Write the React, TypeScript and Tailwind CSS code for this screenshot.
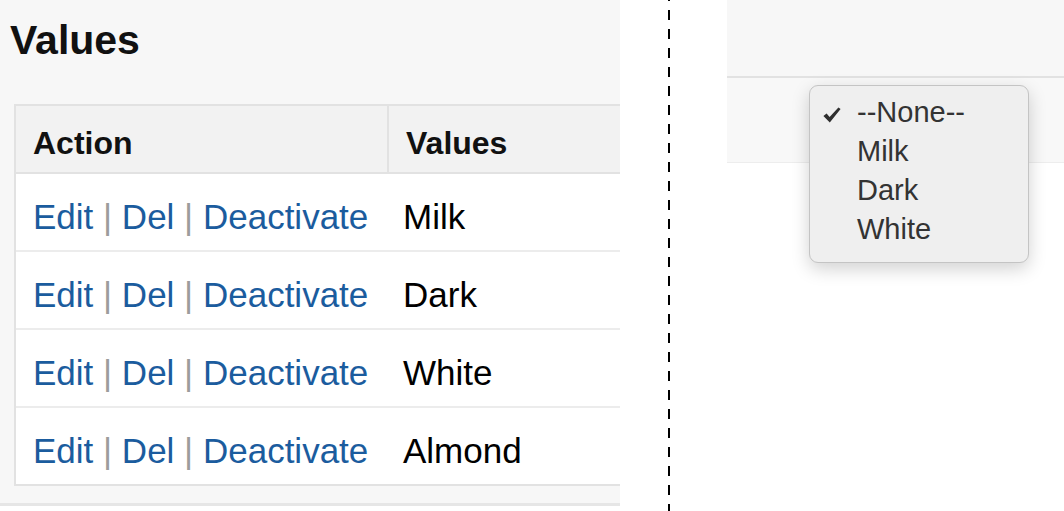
const values = ['Milk', 'Dark', 'White', 'Almond'];
const options = ['--None--', 'Milk', 'Dark', 'White'];

const ActionLinks = () => (
  <span className="whitespace-nowrap">
    <a className="text-[#1b5c9e]">Edit</a>
    <span className="text-[#9c9c9c]"> | </span>
    <a className="text-[#1b5c9e]">Del</a>
    <span className="text-[#9c9c9c]"> | </span>
    <a className="text-[#1b5c9e]">Deactivate</a>
  </span>
);

// heavy macOS-style check mark
const Check = () => (
  <svg width="18" height="16" viewBox="0 0 18 16" className="shrink-0">
    <path d="M0.4 9 L3.6 6.4 L6.6 10 L15.4 0.4 L17.6 2 L6.8 15.4 Z" fill="#2f2f2f" />
  </svg>
);

export default function App() {
  return (
    <div className="flex w-[1064px] h-[511px] bg-white overflow-hidden [font-family:'Liberation_Sans',Arial,sans-serif]">
      {/* Left: values list */}
      <section className="w-[620px] h-[506px] shrink-0 overflow-hidden bg-[#f7f7f7] border-b-[3px] border-[#e6e6e6] pt-[20px] pl-[10px]">
        <h1 className="text-[41px] leading-[41px] font-bold text-[#111]">Values</h1>
        <div className="mt-[43px] ml-[4px] w-[720px] border-2 border-[#e2e2e2] bg-white">
          <div className="flex h-[68px] bg-[#f2f2f2] border-b-2 border-[#e2e2e2] text-[32px] leading-[32px] font-bold text-[#111]">
            <div className="w-[373px] shrink-0 border-r-2 border-[#e2e2e2] pl-[17px] pt-[21px]">Action</div>
            <div className="pl-[17px] pt-[21px]">Values</div>
          </div>
          {values.map((v, i) => (
            <div
              key={v}
              className={`flex text-[35px] leading-[40px] ${i < values.length - 1 ? 'h-[78px] border-b-2 border-[#ececec]' : 'h-[76px]'}`}
            >
              <div className="w-[373px] shrink-0 pl-[17px] pt-[23px]">
                <ActionLinks />
              </div>
              <div className="pl-[14px] pt-[23px] text-black">{v}</div>
            </div>
          ))}
        </div>
      </section>

      {/* Divider */}
      <div className="w-[107px] shrink-0 flex">
        <div className="ml-[48px] w-[2px] h-full bg-[repeating-linear-gradient(to_bottom,#000_0_1px,transparent_1px_10px,#000_10px_19px)]" />
      </div>

      {/* Right: picklist open */}
      <section className="relative flex-1">
        <div className="h-[78px] bg-[#f7f7f7] border-b-2 border-[#e2e2e2]" />
        <div className="h-[85px] bg-[#f8f8f8] border-b border-[#ededed]" />
        <div className="absolute left-[82px] top-[85px] w-[220px] h-[178px] rounded-[9px] border border-[#c4c4c4] bg-[#efefef] shadow-[0_6px_18px_rgba(0,0,0,0.18)] pt-[7px]">
          {options.map((o, i) => (
            <div key={o} className="flex items-center h-[39px] text-[29px] leading-[39px] text-[#333]">
              <div className="w-[47px] pl-[13px] pt-[4px] flex items-center">{i === 0 && <Check />}</div>
              <span>{o}</span>
            </div>
          ))}
        </div>
      </section>
    </div>
  );
}
